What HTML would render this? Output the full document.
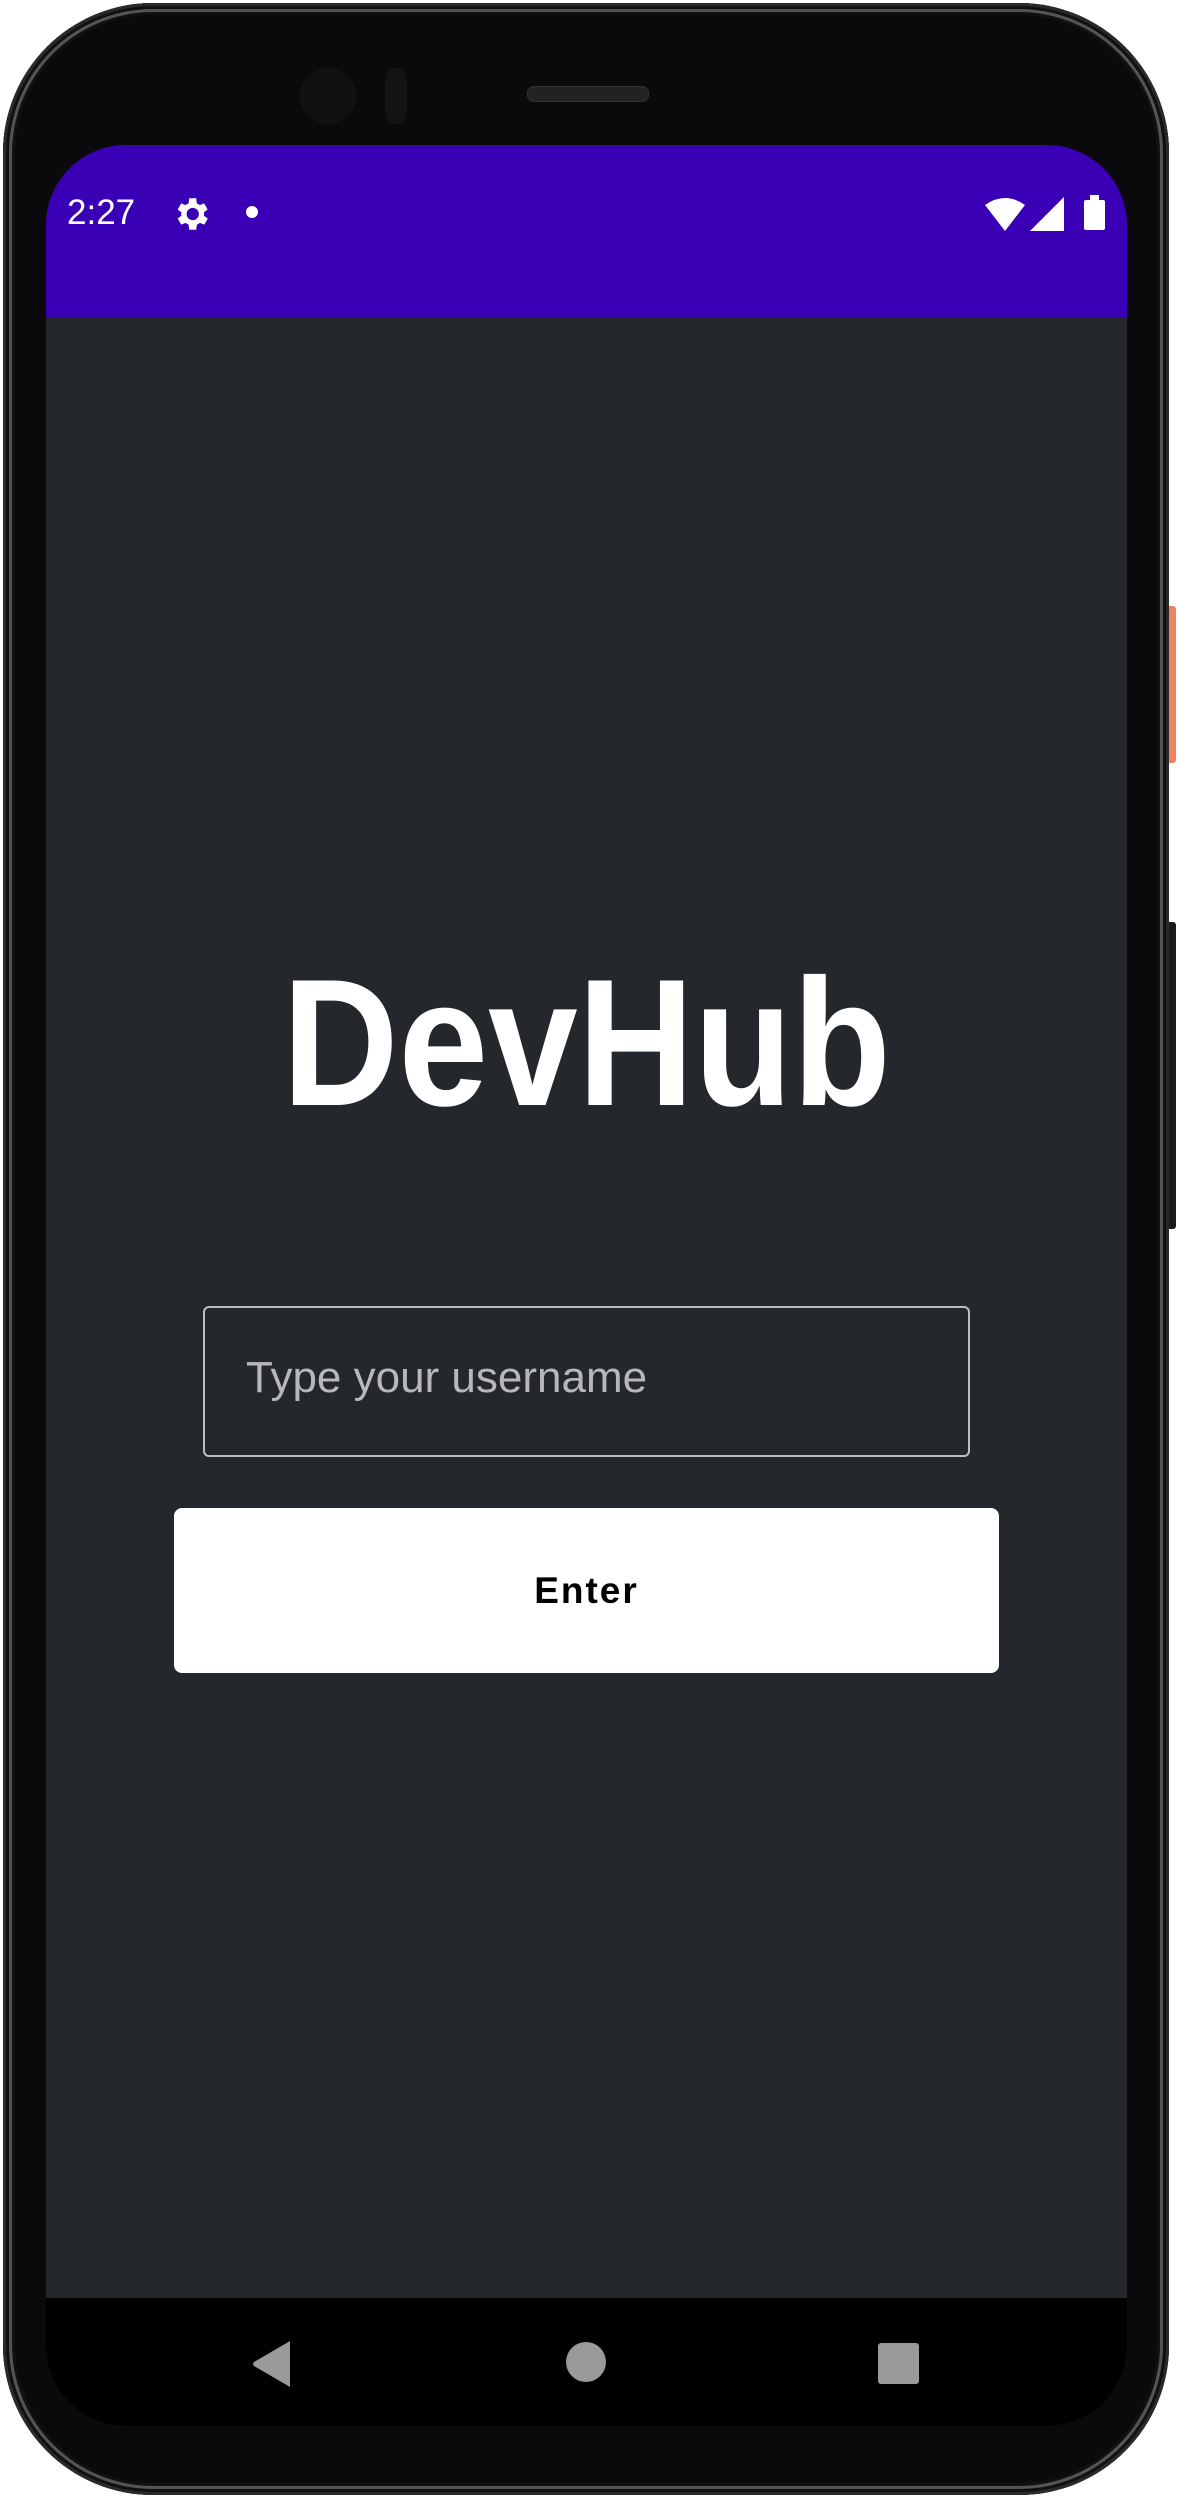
<!DOCTYPE html>
<html><head><meta charset="utf-8"><style>
html,body{margin:0;padding:0;background:#fff;}
body{width:1178px;height:2498px;position:relative;overflow:hidden;font-family:"Liberation Sans",sans-serif;}
.phone{position:absolute;left:3px;top:3px;width:1166px;height:2492px;border-radius:150px;background:#0a0a0c;box-shadow:inset 0 0 0 3px #2a2a2a,inset 0 0 0 6px #111,inset 0 0 0 9px #555,inset 0 0 0 12px #111;}
.btn1{position:absolute;left:1166px;top:606px;width:10px;height:157px;background:#f0805f;border-radius:3px;}
.btn2{position:absolute;left:1166px;top:922px;width:10px;height:307px;background:#1a1a1a;border-radius:3px;}
.screen{position:absolute;left:46px;top:145px;width:1081px;height:2281px;border-radius:80px;overflow:hidden;background:#24282c;}
.status{position:absolute;left:0;top:0;width:100%;height:173px;background:#3900b5;}
.nav{position:absolute;left:0;top:2153px;width:100%;height:128px;background:#000;}
.cam{position:absolute;left:300px;top:68px;width:56px;height:56px;border-radius:50%;background:#111;}
.spk{position:absolute;left:527px;top:86px;width:120px;height:14px;border-radius:7px;background:#222;border:1px solid #333;}
</style></head><body>
<div class="btn1"></div><div class="btn2"></div>
<div class="phone"></div>
<div class="cam"></div>
<div style="position:absolute;left:385px;top:68px;width:22px;height:56px;border-radius:11px;background:#141414;"></div>
<div class="spk"></div>
<div class="screen">
 <div class="status">
  <div style="position:absolute;left:21px;top:48px;color:#fff;font-size:35px;">2:27</div>
  <svg style="position:absolute;left:124px;top:48px" width="42" height="42" viewBox="0 0 24 24"><path fill="#fff" d="M19.4 13a7.5 7.5 0 0 0 0-2l2.1-1.6-2-3.5-2.5 1a7 7 0 0 0-1.7-1L15 3h-4l-.4 2.9a7 7 0 0 0-1.7 1l-2.5-1-2 3.5L6.5 11a7.5 7.5 0 0 0 0 2l-2.1 1.6 2 3.5 2.5-1a7 7 0 0 0 1.7 1L11 21h4l.4-2.9a7 7 0 0 0 1.7-1l2.5 1 2-3.5zM13 15.5a3.5 3.5 0 1 1 0-7 3.5 3.5 0 0 1 0 7z"/></svg>
  <div style="position:absolute;left:200px;top:61px;width:12px;height:12px;border-radius:50%;background:#fff;"></div>
  <svg style="position:absolute;left:939px;top:52px" width="40" height="34" viewBox="0 0 40 34"><path fill="#fff" d="M0 8 Q20 -6 40 8 L20 34 Z"/></svg>
  <svg style="position:absolute;left:984px;top:52px" width="34" height="34" viewBox="0 0 34 34"><path fill="#fff" d="M34 0V34H0Z"/></svg>
  <div style="position:absolute;left:1038px;top:55px;width:21px;height:30px;background:#fff;border-radius:2px;"></div>
  <div style="position:absolute;left:1044px;top:50px;width:9px;height:6px;background:#fff;"></div>
 </div>
 <div style="position:absolute;left:0;top:798px;width:100%;text-align:center;color:#fff;font-weight:bold;font-size:181px;line-height:200px;transform:scaleX(0.89);">DevHub</div>
 <div style="position:absolute;left:157px;top:1161px;width:767px;height:151px;box-sizing:border-box;border:2px solid #bdbdbd;border-radius:6px;"></div>
 <div style="position:absolute;left:200px;top:1208px;color:#b8b8b8;font-size:44px;line-height:50px;">Type your username</div>
 <div style="position:absolute;left:128px;top:1363px;width:825px;height:165px;background:#fff;border-radius:8px;color:#000;font-size:37px;letter-spacing:2px;text-align:center;line-height:165px;font-weight:bold;">Enter</div>
 <div class="nav">
  <svg style="position:absolute;left:206px;top:43px" width="40" height="46" viewBox="0 0 40 46"><path fill="#9a9a9a" d="M38 0V46L2 25Q0 23 2 21Z"/></svg>
  <div style="position:absolute;left:520px;top:44px;width:40px;height:40px;border-radius:50%;background:#9a9a9a;"></div>
  <div style="position:absolute;left:832px;top:45px;width:41px;height:41px;border-radius:3px;background:#9a9a9a;"></div>
 </div>
</div>
</body></html>
